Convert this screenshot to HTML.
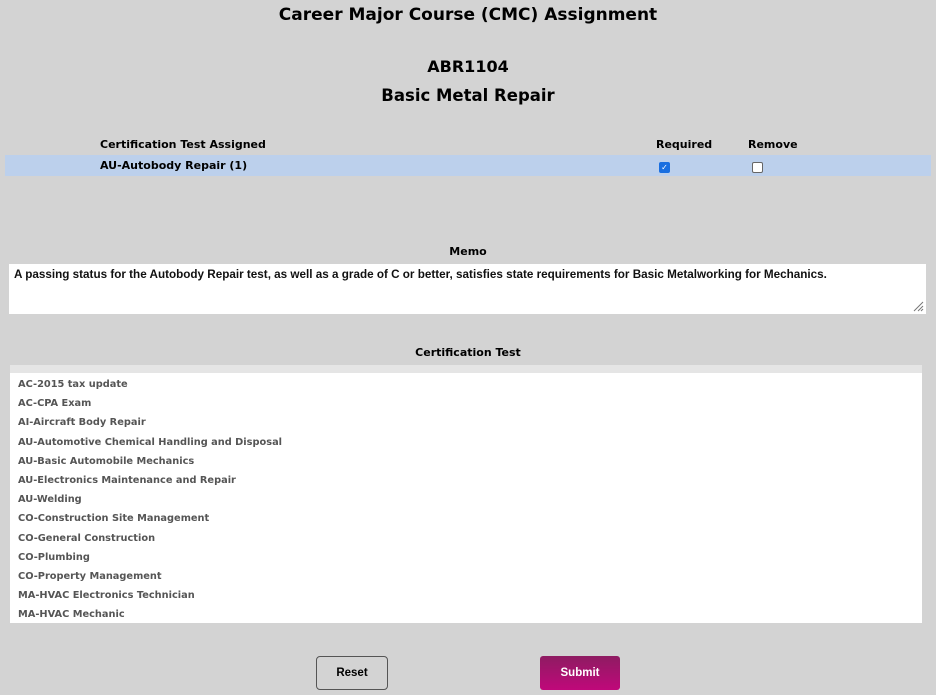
<!DOCTYPE html><html><head><style>
body{margin:0;width:936px;height:695px;background:#d3d3d3;font-family:"DejaVu Sans","Liberation Sans",sans-serif;position:relative;overflow:hidden;color:#000}
.a{position:absolute;white-space:nowrap}
.c{left:0;width:936px;text-align:center}
.b{font-weight:bold}
ul{list-style:none;margin:0;padding:0}
li{height:19.2px;line-height:19.2px;font-size:9.8px;font-weight:bold;color:#555;padding-left:8px}
.cb{position:absolute;width:9px;height:9px;border:1px solid #666;border-radius:2px;background:#fff}
</style></head><body>
<div class="a c b" style="top:5px;font-size:17px">Career Major Course (CMC) Assignment</div>
<div class="a c b" style="top:57px;font-size:16px">ABR1104</div>
<div class="a c b" style="top:86px;font-size:16.5px">Basic Metal Repair</div>
<div class="a b" style="left:100px;top:138px;font-size:11px">Certification Test Assigned</div>
<div class="a b" style="left:656px;top:138px;font-size:11px">Required</div>
<div class="a b" style="left:748px;top:138px;font-size:11px">Remove</div>
<div class="a" style="left:5px;top:155px;width:926px;height:21px;background:#bcd0ec"></div>
<div class="a b" style="left:100px;top:159px;font-size:11px">AU-Autobody Repair (1)</div>
<div class="cb" style="left:659px;top:162px;background:#1a6fe0;border-color:#1a6fe0;color:#fff;font-size:8px;line-height:9px;text-align:center">✓</div>
<div class="cb" style="left:752px;top:162px"></div>
<div class="a c b" style="top:245px;font-size:11px">Memo</div>
<div class="a" style="left:9px;top:264px;width:917px;height:50px;background:#fff;font-family:'Liberation Sans',sans-serif;font-size:11.7px;font-weight:bold;color:#111"><div style="padding:4px 0 0 5px">A passing status for the Autobody Repair test, as well as a grade of C or better, satisfies state requirements for Basic Metalworking for Mechanics.</div>
<svg style="position:absolute;right:2px;bottom:2px" width="12" height="12"><path d="M11 2L2 11M11 6L6 11M11 9L9 11" stroke="#777" stroke-width="1"/></svg></div>
<div class="a c b" style="top:346px;font-size:11px">Certification Test</div>
<div class="a" style="left:10px;top:365px;width:912px;height:258px;background:#fff">
<div style="height:8px;background:#e5e5e5"></div>
<ul style="padding-top:2px">
<li>AC-2015 tax update</li><li>AC-CPA Exam</li><li>AI-Aircraft Body Repair</li><li>AU-Automotive Chemical Handling and Disposal</li><li>AU-Basic Automobile Mechanics</li><li>AU-Electronics Maintenance and Repair</li><li>AU-Welding</li><li>CO-Construction Site Management</li><li>CO-General Construction</li><li>CO-Plumbing</li><li>CO-Property Management</li><li>MA-HVAC Electronics Technician</li><li>MA-HVAC Mechanic</li>
</ul></div>
<div class="a" style="left:316px;top:656px;width:70px;height:32px;border:1px solid #555;border-radius:4px;text-align:center;line-height:32px;font-family:'Liberation Sans',sans-serif;font-weight:bold;font-size:11.5px">Reset</div>
<div class="a" style="left:540px;top:656px;width:80px;height:34px;border-radius:3px;background:linear-gradient(#8e1c62,#c0087a);color:#fff;text-align:center;line-height:34px;font-family:'Liberation Sans',sans-serif;font-weight:bold;font-size:11.5px">Submit</div>
</body></html>
